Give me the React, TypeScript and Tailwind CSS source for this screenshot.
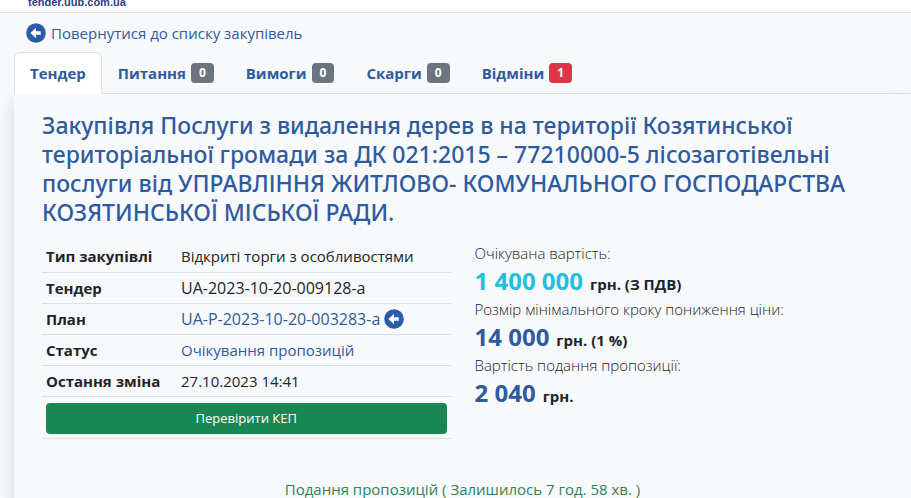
import type { ReactNode } from "react";

type Tab = {
  label: string;
  count?: number;
  badgeClr?: string;
};

const tabs: Tab[] = [
  { label: "Тендер" },
  { label: "Питання", count: 0, badgeClr: "bg-[#6c757d]" },
  { label: "Вимоги", count: 0, badgeClr: "bg-[#6c757d]" },
  { label: "Скарги", count: 0, badgeClr: "bg-[#6c757d]" },
  { label: "Відміни", count: 1, badgeClr: "bg-[#dc3545]" },
];

function ArrowCircle() {
  return (
    <svg className="h-5 w-5 shrink-0" viewBox="0 0 20 20" aria-hidden="true">
      <circle cx="10" cy="10" r="9.8" fill="#2a5caa" />
      <path d="M4.4 10 10 4.8v3.4h4.7v3.6H10v3.4z" fill="#fff" />
    </svg>
  );
}

function Row({ label, children }: { label: string; children: ReactNode }) {
  return (
    <tr className="h-[31px] border-b border-[#dbdfe3]">
      <th scope="row" className="w-[135px] px-1 text-left font-bold">
        {label}
      </th>
      <td className="px-1">{children}</td>
    </tr>
  );
}

type PriceProps = {
  label: string;
  amount: string;
  unit: string;
  amountClr: string;
};

function Price({ label, amount, unit, amountClr }: PriceProps) {
  return (
    <div>
      <dt className="h-6 font-light leading-6">{label}</dt>
      <dd className="flex h-8 items-baseline gap-[7px] font-bold leading-8">
        <span className={`text-[24px] ${amountClr}`}>{amount}</span>
        <span>{unit}</span>
      </dd>
    </div>
  );
}

export default function App() {
  return (
    <div className="min-h-screen overflow-x-clip bg-[#f8f9fb] font-['Open_Sans','Noto_Sans',sans-serif] text-[15px] leading-6 text-[#212529]">
      <header className="flex h-[13px] items-end border-b border-[#dee2e6] bg-white px-7">
        <span className="font-['Liberation_Sans',Arial,sans-serif] text-[11px] font-bold leading-5 text-[#2b3f86]">
          tender.uub.com.ua
        </span>
      </header>

      <main className="pl-[14px]">
        <a href="#" className="flex h-[39px] items-center gap-[5px] pl-3 text-[#2f5b9e]">
          <ArrowCircle />
          Повернутися до списку закупівель
        </a>

        <nav className="flex border-b border-[#dee2e6]">
          {tabs.map((tab, i) => (
            <button
              key={tab.label}
              type="button"
              className={`-mb-px flex h-[42px] items-center gap-[5px] rounded-t-md border px-[15px] font-bold text-[#2f5b9e] ${
                i === 0 ? "border-[#dee2e6] border-b-white bg-white" : "border-transparent"
              }`}
            >
              {tab.label}
              {tab.count !== undefined && (
                <span className={`rounded px-2 text-[12px] leading-5 text-white ${tab.badgeClr}`}>{tab.count}</span>
              )}
            </button>
          ))}
        </nav>

        <section className="min-h-[404px] bg-[#f8f9fb] px-7 pt-[17px] shadow-[0_8px_16px_rgba(0,0,0,0.15)]">
          <h1 className="font-['Noto_Sans','Open_Sans',sans-serif] text-[23px] font-medium leading-[29px] text-[#2f5b9e]">
            Закупівля Послуги з видалення дерев в на території Козятинської територіальної громади за ДК 021:2015 –
            77210000-5 лісозаготівельні послуги від УПРАВЛІННЯ ЖИТЛОВО- КОМУНАЛЬНОГО ГОСПОДАРСТВА КОЗЯТИНСЬКОЇ МІСЬКОЇ
            РАДИ.
          </h1>

          <div className="mt-[14px] grid grid-cols-2 gap-6">
            <div>
              <table className="w-full border-collapse">
                <tbody>
                  <Row label="Тип закупівлі">Відкриті торги з особливостями</Row>
                  <Row label="Тендер">
                    <span className="text-base">UA-2023-10-20-009128-a</span>
                  </Row>
                  <Row label="План">
                    <a href="#" className="flex items-center gap-1 text-base text-[#2f5b9e]">
                      UA-P-2023-10-20-003283-a
                      <ArrowCircle />
                    </a>
                  </Row>
                  <Row label="Статус">
                    <span className="text-[#2f5b9e]">Очікування пропозицій</span>
                  </Row>
                  <Row label="Остання зміна">27.10.2023 14:41</Row>
                </tbody>
              </table>
              <div className="border-b border-[#dbdfe3] px-1 pb-1 pt-[6px]">
                <button type="button" className="block h-[31px] w-full rounded bg-[#198754] text-[13px] text-white">
                  Перевірити КЕП
                </button>
              </div>
            </div>

            <dl>
              <Price label="Очікувана вартість:" amount="1 400 000" unit="грн. (З ПДВ)" amountClr="text-[#22c0dc]" />
              <Price
                label="Розмір мінімального кроку пониження ціни:"
                amount="14 000"
                unit="грн. (1 %)"
                amountClr="text-[#2f5b9e]"
              />
              <Price label="Вартість подання пропозиції:" amount="2 040" unit="грн." amountClr="text-[#2f5b9e]" />
            </dl>
          </div>

          <p className="mt-[38px] h-6 text-center text-[#2f8359]">Подання пропозицій ( Залишилось 7 год. 58 хв. )</p>
        </section>
      </main>
    </div>
  );
}
